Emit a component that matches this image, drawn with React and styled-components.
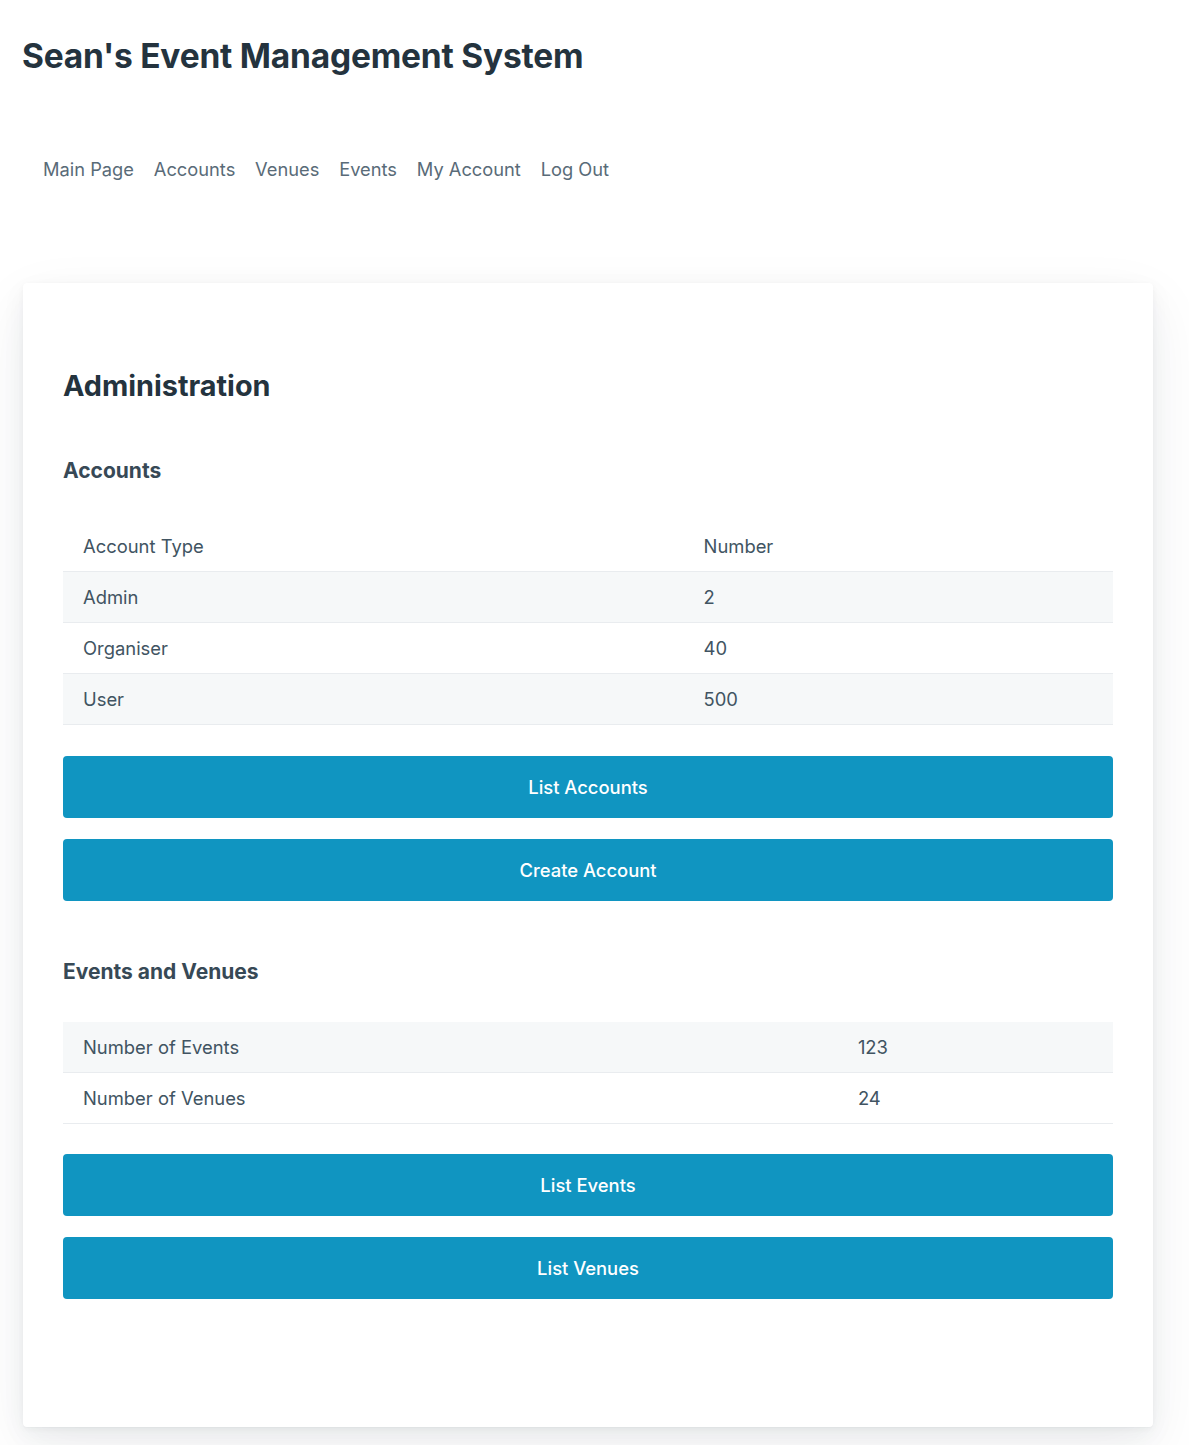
import styled, { createGlobalStyle } from "styled-components";

const Global = createGlobalStyle`
  html, body { margin: 0; padding: 0; background: #fff; }
  body {
    font-family: Inter, "Noto Sans", "Liberation Sans", sans-serif;
    font-size: 17px;
    color: #415462;
    -webkit-font-smoothing: antialiased;
  }
`;

const Page = styled.div`
  padding: 0 36px 18px 23px;
`;

const Header = styled.header`
  padding-top: 36px;
`;

const Title = styled.h1`
  margin: 0 0 0 -1px;
  font-size: 33.5px;
  line-height: 40px;
  font-weight: 700;
  color: #24333e;
  letter-spacing: -0.2px;
`;

const Nav = styled.nav`
  display: flex;
  gap: 19.8px;
  margin-top: 79px;
  padding-left: 20px;
`;

const NavLink = styled.a`
  font-size: 18.3px;
  line-height: 28px;
  color: #596b78;
  text-decoration: none;
`;

const Card = styled.article`
  margin-top: 100px;
  padding: 83px 40px 128px;
  background: #fff;
  border-radius: 4px;
  box-shadow: 0 0.5px 1px rgba(27, 40, 50, 0.02),
    0 2px 6px rgba(27, 40, 50, 0.04), 0 8px 24px rgba(27, 40, 50, 0.05),
    0 20px 60px rgba(27, 40, 50, 0.07);
`;

const Heading = styled.h2`
  margin: 0;
  font-size: 28.8px;
  line-height: 40px;
  font-weight: 700;
  color: #24333e;
`;

const SubHeading = styled.h4`
  margin: ${(p) => p.$top}px 0 0;
  font-size: 21px;
  line-height: 30px;
  font-weight: 700;
  color: #374956;
`;

const Table = styled.table`
  width: 100%;
  border-collapse: collapse;
  margin-top: ${(p) => p.$top}px;
  table-layout: fixed;
`;

const Row = styled.tr`
  background: ${(p) => (p.$striped ? "#f6f8f9" : "#fff")};
  border-bottom: 1px solid #e9ecef;
`;

const Cell = styled.td`
  padding: 0 20px;
  height: 50px;
  font-size: 18.4px;
  color: #415462;
  text-align: left;
  vertical-align: middle;
`;

const HeadCell = styled(Cell).attrs({ as: "th" })`
  font-weight: 400;
  height: 51px;
`;

const Actions = styled.div`
  display: flex;
  flex-direction: column;
  gap: 21px;
  margin-top: ${(p) => p.$top}px;
`;

const Button = styled.button`
  height: 62px;
  border: none;
  border-radius: 4px;
  background: #1095c1;
  color: #fff;
  font-family: inherit;
  font-size: 18.4px;
  font-weight: 500;
  cursor: pointer;
`;

const accounts = [
  ["Admin", 2],
  ["Organiser", 40],
  ["User", 500],
];

const stats = [
  ["Number of Events", 123],
  ["Number of Venues", 24],
];

export default function App() {
  return (
    <Page>
      <Global />
      <Header>
        <Title>Sean's Event Management System</Title>
        <Nav>
          {["Main Page", "Accounts", "Venues", "Events", "My Account", "Log Out"].map((n) => (
            <NavLink key={n} href="#">{n}</NavLink>
          ))}
        </Nav>
      </Header>
      <Card>
        <Heading>Administration</Heading>

        <SubHeading $top={50}>Accounts</SubHeading>
        <Table $top={34}>
          <colgroup>
            <col style={{ width: "59.1%" }} />
            <col />
          </colgroup>
          <thead>
            <Row>
              <HeadCell>Account Type</HeadCell>
              <HeadCell>Number</HeadCell>
            </Row>
          </thead>
          <tbody>
            {accounts.map(([type, n], i) => (
              <Row key={type} $striped={i % 2 === 0}>
                <Cell>{type}</Cell>
                <Cell>{n}</Cell>
              </Row>
            ))}
          </tbody>
        </Table>
        <Actions $top={31}>
          <Button>List Accounts</Button>
          <Button>Create Account</Button>
        </Actions>

        <SubHeading $top={56}>Events and Venues</SubHeading>
        <Table $top={35}>
          <colgroup>
            <col style={{ width: "73.8%" }} />
            <col />
          </colgroup>
          <tbody>
            {stats.map(([label, n], i) => (
              <Row key={label} $striped={i % 2 === 0}>
                <Cell>{label}</Cell>
                <Cell>{n}</Cell>
              </Row>
            ))}
          </tbody>
        </Table>
        <Actions $top={30}>
          <Button>List Events</Button>
          <Button>List Venues</Button>
        </Actions>
      </Card>
    </Page>
  );
}
